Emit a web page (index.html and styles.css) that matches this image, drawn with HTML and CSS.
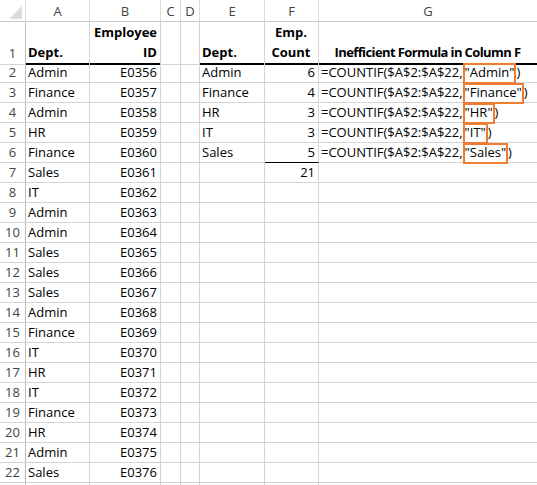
FILE: index.html
```html
<!DOCTYPE html>
<html>
<head>
<meta charset="utf-8">
<link rel="stylesheet" href="styles.css">
</head>
<body>
<div class="sheet">
  <div class="row hdr">
    <div class="c rh corner"><svg width="25" height="21" viewBox="0 0 25 21"><polygon points="9,19 22,19 22,6" fill="#dcdcdc"/></svg></div>
    <div class="c ch">A</div><div class="c ch">B</div><div class="c ch">C</div><div class="c ch">D</div><div class="c ch">E</div><div class="c ch">F</div><div class="c ch">G</div>
  </div>
  <div class="row r1">
    <div class="c rh">1</div>
    <div class="c b thick">Dept.</div>
    <div class="c b thick right">Employee<br>ID</div>
    <div class="c"></div><div class="c"></div>
    <div class="c b thick">Dept.</div>
    <div class="c b thick center">Emp.<br>Count</div>
    <div class="c b thick center tight">Inefficient Formula in Column F</div>
  </div>
  <div class="row"><div class="c rh">2</div><div class="c">Admin</div><div class="c right">E0356</div><div class="c"></div><div class="c"></div><div class="c">Admin</div><div class="c right">6</div><div class="c f"><span>=COUNTIF($A$2:$A$22,</span><span class="hl">"Admin"</span><span>)</span></div></div>
  <div class="row"><div class="c rh">3</div><div class="c">Finance</div><div class="c right">E0357</div><div class="c"></div><div class="c"></div><div class="c">Finance</div><div class="c right">4</div><div class="c f"><span>=COUNTIF($A$2:$A$22,</span><span class="hl">"Finance"</span><span>)</span></div></div>
  <div class="row"><div class="c rh">4</div><div class="c">Admin</div><div class="c right">E0358</div><div class="c"></div><div class="c"></div><div class="c">HR</div><div class="c right">3</div><div class="c f"><span>=COUNTIF($A$2:$A$22,</span><span class="hl">"HR"</span><span>)</span></div></div>
  <div class="row"><div class="c rh">5</div><div class="c">HR</div><div class="c right">E0359</div><div class="c"></div><div class="c"></div><div class="c">IT</div><div class="c right">3</div><div class="c f"><span>=COUNTIF($A$2:$A$22,</span><span class="hl">"IT"</span><span>)</span></div></div>
  <div class="row"><div class="c rh">6</div><div class="c">Finance</div><div class="c right">E0360</div><div class="c"></div><div class="c"></div><div class="c">Sales</div><div class="c right total">5</div><div class="c f"><span>=COUNTIF($A$2:$A$22,</span><span class="hl">"Sales"</span><span>)</span></div></div>
  <div class="row"><div class="c rh">7</div><div class="c">Sales</div><div class="c right">E0361</div><div class="c"></div><div class="c"></div><div class="c"></div><div class="c right">21</div><div class="c"></div></div>
  <div class="row"><div class="c rh">8</div><div class="c">IT</div><div class="c right">E0362</div><div class="c"></div><div class="c"></div><div class="c"></div><div class="c"></div><div class="c"></div></div>
  <div class="row"><div class="c rh">9</div><div class="c">Admin</div><div class="c right">E0363</div><div class="c"></div><div class="c"></div><div class="c"></div><div class="c"></div><div class="c"></div></div>
  <div class="row"><div class="c rh">10</div><div class="c">Admin</div><div class="c right">E0364</div><div class="c"></div><div class="c"></div><div class="c"></div><div class="c"></div><div class="c"></div></div>
  <div class="row"><div class="c rh">11</div><div class="c">Sales</div><div class="c right">E0365</div><div class="c"></div><div class="c"></div><div class="c"></div><div class="c"></div><div class="c"></div></div>
  <div class="row"><div class="c rh">12</div><div class="c">Sales</div><div class="c right">E0366</div><div class="c"></div><div class="c"></div><div class="c"></div><div class="c"></div><div class="c"></div></div>
  <div class="row"><div class="c rh">13</div><div class="c">Sales</div><div class="c right">E0367</div><div class="c"></div><div class="c"></div><div class="c"></div><div class="c"></div><div class="c"></div></div>
  <div class="row"><div class="c rh">14</div><div class="c">Admin</div><div class="c right">E0368</div><div class="c"></div><div class="c"></div><div class="c"></div><div class="c"></div><div class="c"></div></div>
  <div class="row"><div class="c rh">15</div><div class="c">Finance</div><div class="c right">E0369</div><div class="c"></div><div class="c"></div><div class="c"></div><div class="c"></div><div class="c"></div></div>
  <div class="row"><div class="c rh">16</div><div class="c">IT</div><div class="c right">E0370</div><div class="c"></div><div class="c"></div><div class="c"></div><div class="c"></div><div class="c"></div></div>
  <div class="row"><div class="c rh">17</div><div class="c">HR</div><div class="c right">E0371</div><div class="c"></div><div class="c"></div><div class="c"></div><div class="c"></div><div class="c"></div></div>
  <div class="row"><div class="c rh">18</div><div class="c">IT</div><div class="c right">E0372</div><div class="c"></div><div class="c"></div><div class="c"></div><div class="c"></div><div class="c"></div></div>
  <div class="row"><div class="c rh">19</div><div class="c">Finance</div><div class="c right">E0373</div><div class="c"></div><div class="c"></div><div class="c"></div><div class="c"></div><div class="c"></div></div>
  <div class="row"><div class="c rh">20</div><div class="c">HR</div><div class="c right">E0374</div><div class="c"></div><div class="c"></div><div class="c"></div><div class="c"></div><div class="c"></div></div>
  <div class="row"><div class="c rh">21</div><div class="c">Admin</div><div class="c right">E0375</div><div class="c"></div><div class="c"></div><div class="c"></div><div class="c"></div><div class="c"></div></div>
  <div class="row"><div class="c rh">22</div><div class="c">Sales</div><div class="c right">E0376</div><div class="c"></div><div class="c"></div><div class="c"></div><div class="c"></div><div class="c"></div></div>
  <div class="row"><div class="c rh"></div><div class="c"></div><div class="c"></div><div class="c"></div><div class="c"></div><div class="c"></div><div class="c"></div><div class="c"></div></div>
</div>
</body>
</html>
```
FILE: styles.css
```css
html, body {
  margin: 0;
  padding: 0;
  height: 485px;
  overflow: hidden;
  background: #fff;
}
.sheet {
  width: 537px;
  font-family: "Open Sans", "Liberation Sans", sans-serif;
  font-size: 13px;
  color: #000;
}
.row {
  display: grid;
  grid-template-columns: 26px 64px 71px 20px 19px 65px 54px 219px;
  height: 20px;
}
.row.hdr { height: 22px; }
.row.r1 { height: 41px; }
.c {
  box-sizing: border-box;
  border-right: 1px solid #d4d4d4;
  border-bottom: 1px solid #d4d4d4;
  line-height: 19px;
  padding: 0 3px 0 2px;
  white-space: nowrap;
  overflow: visible;
  display: flex;
  flex-direction: column;
  justify-content: flex-end;
  align-items: flex-start;
}
.c.right { align-items: flex-end; text-align: right; }
.c.center { align-items: center; text-align: center; }
.r1 .c { line-height: 20px; padding-bottom: 1px; }
.tight { letter-spacing: -0.6px; }
.rh {
  padding: 0;
  align-items: center;
  color: #444;
  border-right-color: #bdbdbd;
  border-bottom-color: #d4d4d4;
}
.hdr .c {
  border-bottom-color: #c8c8c8;
  border-right-color: #dadada;
  color: #444;
  align-items: center;
  justify-content: center;
  padding: 1px 0 0;
  line-height: 20px;
}
.hdr .corner { padding: 0; justify-content: flex-start; align-items: flex-start; }
.hdr .corner svg { display: block; }
.b { font-weight: bold; }
.thick { border-bottom: 2px solid #000; }
.total { border-bottom: 1px solid #000; }
.f {
  flex-direction: row;
  align-items: stretch;
  justify-content: flex-start;
  padding-left: 2px;
}
.f span { line-height: 19px; }
.hl {
  position: relative;
  padding: 0 2px;
}
.hl::after {
  content: "";
  position: absolute;
  left: 0;
  right: 0;
  top: 0;
  bottom: -2px;
  border: 2px solid #ed7d31;
}
```
